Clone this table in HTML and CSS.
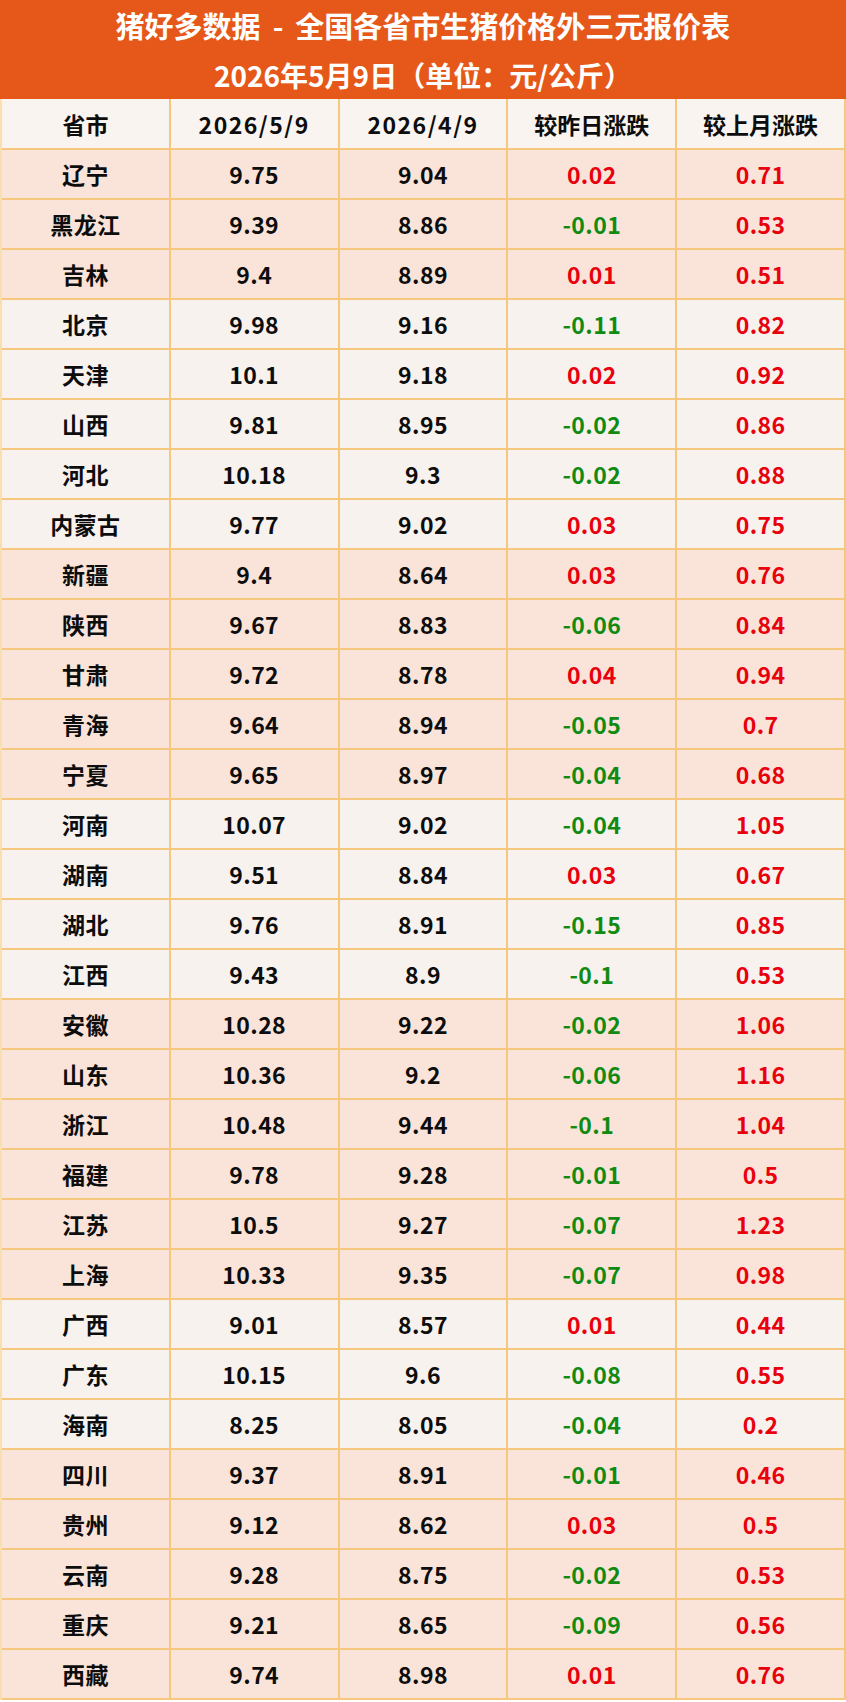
FILE: index.html
```html
<!DOCTYPE html>
<html lang="zh-CN">
<head>
<meta charset="utf-8">
<title>猪好多数据 - 全国各省市生猪价格外三元报价表</title>
<link rel="stylesheet" href="styles.css">
</head>
<body>
<div class="sheet">
  <div class="title">
    <div class="title-line main">猪好多数据<span class="sep">-</span>全国各省市生猪价格外三元报价表</div>
    <div class="title-line">2026年5月9日（单位：元/公斤）</div>
  </div>
  <div class="grid">
    <div class="row head"><div>省市</div><div class="date">2026/5/9</div><div class="date">2026/4/9</div><div>较昨日涨跌</div><div>较上月涨跌</div></div>
    <div class="row peach"><div>辽宁</div><div>9.75</div><div>9.04</div><div class="up">0.02</div><div class="up">0.71</div></div>
    <div class="row peach"><div>黑龙江</div><div>9.39</div><div>8.86</div><div class="down">-0.01</div><div class="up">0.53</div></div>
    <div class="row peach"><div>吉林</div><div>9.4</div><div>8.89</div><div class="up">0.01</div><div class="up">0.51</div></div>
    <div class="row light"><div>北京</div><div>9.98</div><div>9.16</div><div class="down">-0.11</div><div class="up">0.82</div></div>
    <div class="row light"><div>天津</div><div>10.1</div><div>9.18</div><div class="up">0.02</div><div class="up">0.92</div></div>
    <div class="row light"><div>山西</div><div>9.81</div><div>8.95</div><div class="down">-0.02</div><div class="up">0.86</div></div>
    <div class="row light"><div>河北</div><div>10.18</div><div>9.3</div><div class="down">-0.02</div><div class="up">0.88</div></div>
    <div class="row light"><div>内蒙古</div><div>9.77</div><div>9.02</div><div class="up">0.03</div><div class="up">0.75</div></div>
    <div class="row peach"><div>新疆</div><div>9.4</div><div>8.64</div><div class="up">0.03</div><div class="up">0.76</div></div>
    <div class="row peach"><div>陕西</div><div>9.67</div><div>8.83</div><div class="down">-0.06</div><div class="up">0.84</div></div>
    <div class="row peach"><div>甘肃</div><div>9.72</div><div>8.78</div><div class="up">0.04</div><div class="up">0.94</div></div>
    <div class="row peach"><div>青海</div><div>9.64</div><div>8.94</div><div class="down">-0.05</div><div class="up">0.7</div></div>
    <div class="row peach"><div>宁夏</div><div>9.65</div><div>8.97</div><div class="down">-0.04</div><div class="up">0.68</div></div>
    <div class="row light"><div>河南</div><div>10.07</div><div>9.02</div><div class="down">-0.04</div><div class="up">1.05</div></div>
    <div class="row light"><div>湖南</div><div>9.51</div><div>8.84</div><div class="up">0.03</div><div class="up">0.67</div></div>
    <div class="row light"><div>湖北</div><div>9.76</div><div>8.91</div><div class="down">-0.15</div><div class="up">0.85</div></div>
    <div class="row light"><div>江西</div><div>9.43</div><div>8.9</div><div class="down">-0.1</div><div class="up">0.53</div></div>
    <div class="row peach"><div>安徽</div><div>10.28</div><div>9.22</div><div class="down">-0.02</div><div class="up">1.06</div></div>
    <div class="row peach"><div>山东</div><div>10.36</div><div>9.2</div><div class="down">-0.06</div><div class="up">1.16</div></div>
    <div class="row peach"><div>浙江</div><div>10.48</div><div>9.44</div><div class="down">-0.1</div><div class="up">1.04</div></div>
    <div class="row peach"><div>福建</div><div>9.78</div><div>9.28</div><div class="down">-0.01</div><div class="up">0.5</div></div>
    <div class="row peach"><div>江苏</div><div>10.5</div><div>9.27</div><div class="down">-0.07</div><div class="up">1.23</div></div>
    <div class="row peach"><div>上海</div><div>10.33</div><div>9.35</div><div class="down">-0.07</div><div class="up">0.98</div></div>
    <div class="row light"><div>广西</div><div>9.01</div><div>8.57</div><div class="up">0.01</div><div class="up">0.44</div></div>
    <div class="row light"><div>广东</div><div>10.15</div><div>9.6</div><div class="down">-0.08</div><div class="up">0.55</div></div>
    <div class="row light"><div>海南</div><div>8.25</div><div>8.05</div><div class="down">-0.04</div><div class="up">0.2</div></div>
    <div class="row peach"><div>四川</div><div>9.37</div><div>8.91</div><div class="down">-0.01</div><div class="up">0.46</div></div>
    <div class="row peach"><div>贵州</div><div>9.12</div><div>8.62</div><div class="up">0.03</div><div class="up">0.5</div></div>
    <div class="row peach"><div>云南</div><div>9.28</div><div>8.75</div><div class="down">-0.02</div><div class="up">0.53</div></div>
    <div class="row peach"><div>重庆</div><div>9.21</div><div>8.65</div><div class="down">-0.09</div><div class="up">0.56</div></div>
    <div class="row peach"><div>西藏</div><div>9.74</div><div>8.98</div><div class="up">0.01</div><div class="up">0.76</div></div>
  </div>
</div>
</body>
</html>
```
FILE: styles.css
```css
html, body {
  margin: 0;
  padding: 0;
  background: #ffffff;
}
.sheet {
  width: 846px;
  font-family: "Noto Sans CJK SC", "Noto Sans", "Liberation Sans", sans-serif;
  font-weight: 700;
}
.title {
  height: 99px;
  background: #e65819;
  color: #ffffff;
  font-size: 28px;
  text-align: center;
  display: flex;
  flex-direction: column;
  justify-content: center;
}
.title-line {
  line-height: 50px;
  height: 50px;
}
.title-line.main {
  font-size: 29px;
}
.sep {
  padding: 0 12px;
}
.grid {
  display: grid;
  grid-template-columns: repeat(5, 1fr);
  gap: 2px;
  background: #f6c87e;
  border-left: 2px solid #fcdfae;
  padding: 0 2px 2px 0;
}
.row {
  display: contents;
}
.row > div {
  height: 48px;
  display: flex;
  align-items: center;
  justify-content: center;
  font-size: 23px;
  letter-spacing: 0.4px;
  color: #0d0d0d;
}
.row.head > div {
  height: 49px;
  background: #faf4f0;
  font-size: 23px;
  letter-spacing: 0;
}
.row.head > .date {
  letter-spacing: 1.5px;
}
.row.peach > div {
  background: #fae4d9;
}
.row.light > div {
  background: #f8f2ef;
}
.row > .up {
  color: #e8000d;
}
.row > .down {
  color: #118a12;
}
```
